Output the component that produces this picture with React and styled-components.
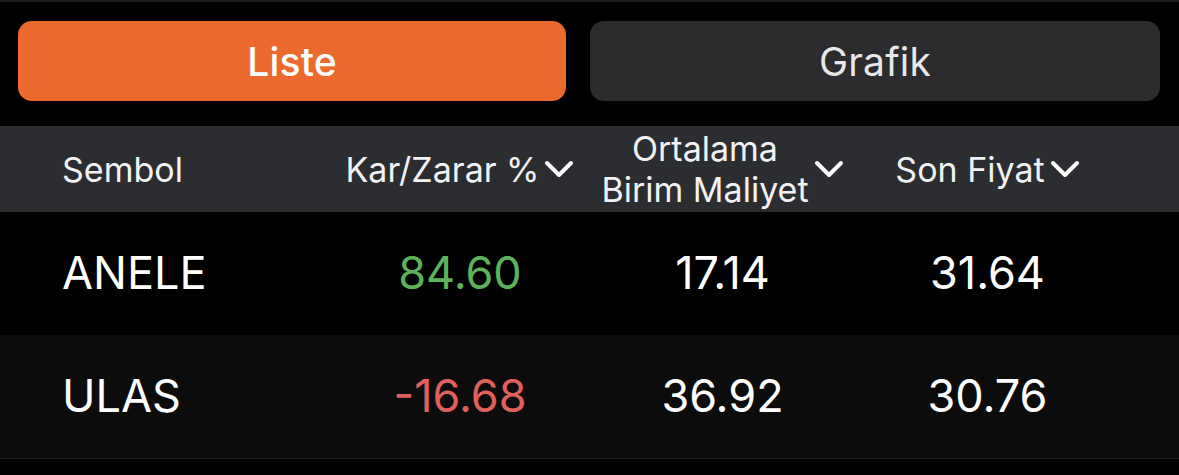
import React from 'react';
import styled, { createGlobalStyle } from 'styled-components';

const GlobalStyle = createGlobalStyle`
  html, body {
    margin: 0;
    padding: 0;
    background: #000;
  }
  body {
    font-family: Inter, "Noto Sans", "Liberation Sans", sans-serif;
    color: #fff;
    -webkit-font-smoothing: antialiased;
  }
`;

const Screen = styled.div`
  width: 1179px;
  height: 475px;
  background: #000;
  border-top: 2px solid #1b1b1d;
  box-sizing: border-box;
  overflow: hidden;
`;

const Tabs = styled.div`
  display: grid;
  grid-template-columns: 548px 1fr;
  gap: 24px;
  padding: 19px 19px 25px 18px;
`;

const Tab = styled.button`
  height: 80px;
  border: none;
  border-radius: 14px;
  background: ${p => (p.$active ? '#ec6a2e' : '#2c2c2e')};
  color: ${p => (p.$active ? '#fff' : '#e8e8ea')};
  font-family: inherit;
  font-size: 39px;
  font-weight: ${p => (p.$active ? 500 : 400)};
  letter-spacing: 0.2px;
  padding: 0;
  cursor: pointer;
`;

const cols = '340px 240px 285px 245px 1fr';

const HeaderRow = styled.div`
  display: grid;
  grid-template-columns: ${cols};
  align-items: center;
  height: 86px;
  background: #2c2d30;
`;

const HeadCell = styled.div`
  display: flex;
  align-items: center;
  justify-content: ${p => (p.$left ? 'flex-start' : 'center')};
  padding-left: ${p => (p.$left ? '62px' : '0')};
  gap: 5px;
  font-size: 34px;
  color: #f2f2f4;
`;

const HeadLabel = styled.span`
  text-align: center;
  line-height: 41px;
`;

const Row = styled.div`
  display: grid;
  grid-template-columns: ${cols};
  align-items: center;
  height: 123px;
  background: ${p => (p.$alt ? '#0c0c0c' : '#000')};
  border-bottom: ${p => (p.$last ? '1px solid #202022' : 'none')};
`;

const Cell = styled.div`
  font-size: 45px;
  font-weight: 400;
  padding-left: ${p => (p.$left ? '62px' : '0')};
  text-align: ${p => (p.$left ? 'left' : 'center')};
  color: ${p => p.$color || '#fff'};
  padding-bottom: 2px;
`;

const Chevron = () => (
  <svg width="30" height="18" viewBox="0 0 30 18" fill="none">
    <path d="M3 3l12 12L27 3" stroke="#fff" strokeWidth="4" strokeLinecap="round" strokeLinejoin="round" />
  </svg>
);

const rows = [
  { sym: 'ANELE', pl: '84.60', avg: '17.14', last: '31.64', color: '#5cb35c' },
  { sym: 'ULAS', pl: '-16.68', avg: '36.92', last: '30.76', color: '#e0605c' },
];

export default function App() {
  return (
    <>
      <GlobalStyle />
      <Screen>
        <Tabs>
          <Tab $active>Liste</Tab>
          <Tab>Grafik</Tab>
        </Tabs>
        <HeaderRow>
          <HeadCell $left>Sembol</HeadCell>
          <HeadCell>
            <HeadLabel>Kar/Zarar %</HeadLabel>
            <Chevron />
          </HeadCell>
          <HeadCell>
            <HeadLabel>Ortalama<br />Birim Maliyet</HeadLabel>
            <Chevron />
          </HeadCell>
          <HeadCell>
            <HeadLabel>Son Fiyat</HeadLabel>
            <Chevron />
          </HeadCell>
        </HeaderRow>
        {rows.map((r, i) => (
          <Row key={r.sym} $alt={i % 2 === 1} $last={i === rows.length - 1}>
            <Cell $left>{r.sym}</Cell>
            <Cell $color={r.color}>{r.pl}</Cell>
            <Cell>{r.avg}</Cell>
            <Cell>{r.last}</Cell>
          </Row>
        ))}
      </Screen>
    </>
  );
}
